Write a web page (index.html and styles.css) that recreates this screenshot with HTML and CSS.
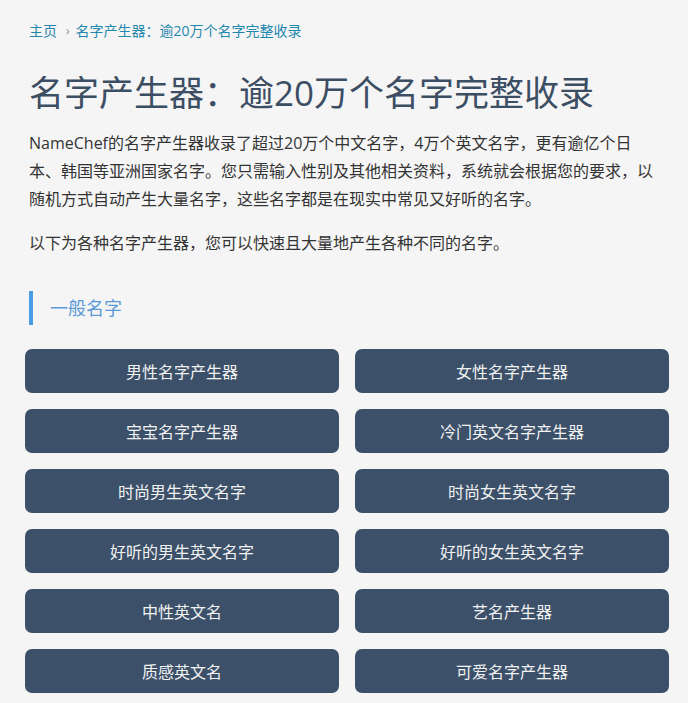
FILE: index.html
```
<!DOCTYPE html>
<html lang="zh-CN">
<head>
<meta charset="utf-8">
<title>名字产生器</title>
<link rel="stylesheet" href="styles.css">
</head>
<body>
<div class="page">
  <nav class="crumbs">
    <a class="crumb-link" href="#">主页</a>
    <span class="crumb-sep">›</span>
    <span class="crumb-current">名字产生器：逾20万个名字完整收录</span>
  </nav>
  <h1 class="title">名字产生器：逾20万个名字完整收录</h1>
  <p class="text">NameChef的名字产生器收录了超过20万个中文名字，4万个英文名字，更有逾亿个日本、韩国等亚洲国家名字。您只需输入性别及其他相关资料，系统就会根据您的要求，以随机方式自动产生大量名字，这些名字都是在现实中常见又好听的名字。</p>
  <p class="text">以下为各种名字产生器，您可以快速且大量地产生各种不同的名字。</p>
  <h2 class="section-title">一般名字</h2>
  <div class="btn-grid">
    <a class="btn" href="#">男性名字产生器</a>
    <a class="btn" href="#">女性名字产生器</a>
    <a class="btn" href="#">宝宝名字产生器</a>
    <a class="btn" href="#">冷门英文名字产生器</a>
    <a class="btn" href="#">时尚男生英文名字</a>
    <a class="btn" href="#">时尚女生英文名字</a>
    <a class="btn" href="#">好听的男生英文名字</a>
    <a class="btn" href="#">好听的女生英文名字</a>
    <a class="btn" href="#">中性英文名</a>
    <a class="btn" href="#">艺名产生器</a>
    <a class="btn" href="#">质感英文名</a>
    <a class="btn" href="#">可爱名字产生器</a>
  </div>
</div>
</body>
</html>
```
FILE: styles.css
```
html, body {
  margin: 0;
  padding: 0;
  background: #f5f5f5;
}
body {
  font-family: "Open Sans", "Noto Sans CJK SC", sans-serif;
  color: #333333;
}
.page {
  padding: 21px 29px 0 29px;
}
.crumbs {
  display: flex;
  align-items: center;
  font-size: 14px;
  line-height: 20px;
  height: 20px;
}
.crumb-link, .crumb-current {
  color: #1e88ad;
  text-decoration: none;
}
.crumb-sep {
  color: #888888;
  margin: 0 6px 0 9px;
  font-size: 12px;
}
.title {
  margin: 30px 0 0 0;
  font-size: 35px;
  line-height: 44px;
  font-weight: 400;
  color: #3c4e63;
}
.text {
  margin: 14px 0 0 0;
  font-size: 16px;
  line-height: 28px;
  color: #333333;
}
.text + .text {
  margin-top: 16px;
}
.section-title {
  margin: 34px 0 0 0;
  border-left: 4px solid #4a9be6;
  padding-left: 17px;
  font-size: 18px;
  line-height: 34px;
  font-weight: 400;
  color: #5b9ad6;
}
.btn-grid {
  margin: 24px -10px 0 -4px;
  display: grid;
  grid-template-columns: 1fr 1fr;
  column-gap: 16px;
  row-gap: 16px;
}
.btn {
  display: flex;
  align-items: center;
  justify-content: center;
  height: 44px;
  border-radius: 7px;
  background: #3c5069;
  color: #f2f2f2;
  font-size: 16px;
  text-decoration: none;
}
```
